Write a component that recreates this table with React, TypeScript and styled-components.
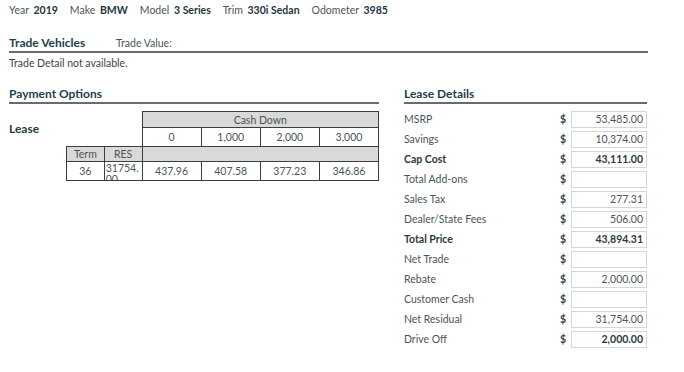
import React from "react";
import styled, { createGlobalStyle } from "styled-components";

const GlobalStyle = createGlobalStyle`
  body {
    margin: 0;
    background: #fff;
    font-family: Lato, "Open Sans", sans-serif;
    color: #4a5559;
  }
`;

type Detail = {
  label: string;
  value: string;
  boldLabel?: boolean;
  boldValue?: boolean;
};

const vehicle = [
  { label: "Year", value: "2019" },
  { label: "Make", value: "BMW" },
  { label: "Model", value: "3 Series" },
  { label: "Trim", value: "330i Sedan" },
  { label: "Odometer", value: "3985" },
];

const cashDown = ["0", "1,000", "2,000", "3,000"];
const payments = ["437.96", "407.58", "377.23", "346.86"];

const details: Detail[] = [
  { label: "MSRP", value: "53,485.00" },
  { label: "Savings", value: "10,374.00" },
  { label: "Cap Cost", value: "43,111.00", boldLabel: true, boldValue: true },
  { label: "Total Add-ons", value: "" },
  { label: "Sales Tax", value: "277.31" },
  { label: "Dealer/State Fees", value: "506.00" },
  { label: "Total Price", value: "43,894.31", boldLabel: true, boldValue: true },
  { label: "Net Trade", value: "" },
  { label: "Rebate", value: "2,000.00" },
  { label: "Customer Cash", value: "" },
  { label: "Net Residual", value: "31,754.00" },
  { label: "Drive Off", value: "2,000.00", boldValue: true },
];

const App: React.FC = () => {
  return (
    <>
      <GlobalStyle />
      <Page>
        <VehicleBar>
          {vehicle.map((v) => (
            <VehicleItem key={v.label}>
              {v.label} <b>{v.value}</b>
            </VehicleItem>
          ))}
        </VehicleBar>

        <SectionHead>
          <Heading>Trade Vehicles</Heading>
          <SubLabel>Trade Value:</SubLabel>
        </SectionHead>
        <Note>Trade Detail not available.</Note>

        <Columns>
          <div>
            <SectionHead>
              <Heading>Payment Options</Heading>
            </SectionHead>
            <LeaseRow>
              <LeaseLabel>Lease</LeaseLabel>
              <Grid>
                <tbody>
                  <tr style={{ height: 16 }}>
                    <Blank colSpan={2} rowSpan={2} />
                    <Cell colSpan={4} $shade>
                      Cash Down
                    </Cell>
                  </tr>
                  <tr style={{ height: 19 }}>
                    {cashDown.map((c) => (
                      <Cell key={c}>{c}</Cell>
                    ))}
                  </tr>
                  <tr style={{ height: 15 }}>
                    <Cell $shade>Term</Cell>
                    <Cell $shade>RES</Cell>
                    <Cell colSpan={4} $shade />
                  </tr>
                  <tr style={{ height: 18 }}>
                    <Cell>36</Cell>
                    <Cell>
                      <Clipped>31754.00</Clipped>
                    </Cell>
                    {payments.map((p) => (
                      <Cell key={p}>{p}</Cell>
                    ))}
                  </tr>
                </tbody>
              </Grid>
            </LeaseRow>
          </div>

          <div>
            <SectionHead>
              <Heading>Lease Details</Heading>
            </SectionHead>
            <DetailList>
              {details.map((d) => (
                <DetailRow key={d.label}>
                  <DetailLabel $bold={d.boldLabel}>{d.label}</DetailLabel>
                  <Dollar>$</Dollar>
                  <ValueBox $bold={d.boldValue}>{d.value}</ValueBox>
                </DetailRow>
              ))}
            </DetailList>
          </div>
        </Columns>
      </Page>
    </>
  );
};

const Page = styled.div`
  width: 639px;
  padding: 3px 0 0 9px;
  font-size: 10.5px;
`;

const VehicleBar = styled.div`
  display: flex;
  gap: 12px;
  line-height: 14px;
  height: 14px;
  white-space: nowrap;
`;

const VehicleItem = styled.span`
  color: #4a5559;
  b {
    color: #1e3540;
    font-weight: 700;
    margin-left: 2px;
  }
`;

const SectionHead = styled.div`
  display: flex;
  align-items: flex-end;
  height: 16px;
  border-bottom: 2px solid #6b6b6b;
  margin-top: 17px;
  padding-bottom: 1px;
`;

const Heading = styled.span`
  font-size: 12px;
  font-weight: 700;
  color: #1e3f4c;
  width: 107px;
  white-space: nowrap;
`;

const SubLabel = styled.span`
  color: #4a5559;
  padding-bottom: 1px;
`;

const Note = styled.div`
  margin-top: 3px;
  line-height: 14px;
  color: #3b464a;
`;

const Columns = styled.div`
  display: grid;
  grid-template-columns: 370px 243px;
  gap: 25px;
  margin-top: -2px;
`;

const LeaseRow = styled.div`
  display: flex;
  margin-top: 7px;
`;

const LeaseLabel = styled.div`
  width: 57px;
  padding-top: 10px;
  font-size: 12px;
  font-weight: 700;
  color: #2a3a40;
`;

const Grid = styled.table`
  border-collapse: collapse;
  table-layout: fixed;
  width: 313px;
  color: #4a5559;
`;

const Blank = styled.td`
  width: 75px;
  padding: 0;
`;

const Cell = styled.td<{ $shade?: boolean }>`
  border: 1px solid #3d3d3d;
  background: ${(p) => (p.$shade ? "#d9d9d9" : "#fff")};
  text-align: center;
  padding: 0;
  font-size: 10.5px;
  line-height: 12px;
`;

const Clipped = styled.div`
  height: 17px;
  overflow: hidden;
  line-height: 11px;
  word-break: break-all;
  padding-top: 1px;
  text-align: left;
  padding-left: 1px;
`;

const DetailList = styled.div`
  display: flex;
  flex-direction: column;
  gap: 3px;
  margin-top: 7px;
`;

const DetailRow = styled.div`
  display: flex;
  align-items: center;
  height: 17px;
  line-height: 15px;
`;

const DetailLabel = styled.span<{ $bold?: boolean }>`
  width: 156px;
  font-weight: ${(p) => (p.$bold ? 700 : 400)};
  color: ${(p) => (p.$bold ? "#2a3a40" : "#4a5559")};
`;

const Dollar = styled.span`
  width: 11px;
  font-weight: 700;
  color: #2e4550;
`;

const ValueBox = styled.div<{ $bold?: boolean }>`
  box-sizing: border-box;
  width: 76px;
  height: 17px;
  border: 1px solid #d6d6d6;
  text-align: right;
  padding: 0 3px;
  line-height: 15px;
  font-weight: ${(p) => (p.$bold ? 700 : 400)};
  color: ${(p) => (p.$bold ? "#2a3a40" : "#4a5559")};
`;

export default App;
